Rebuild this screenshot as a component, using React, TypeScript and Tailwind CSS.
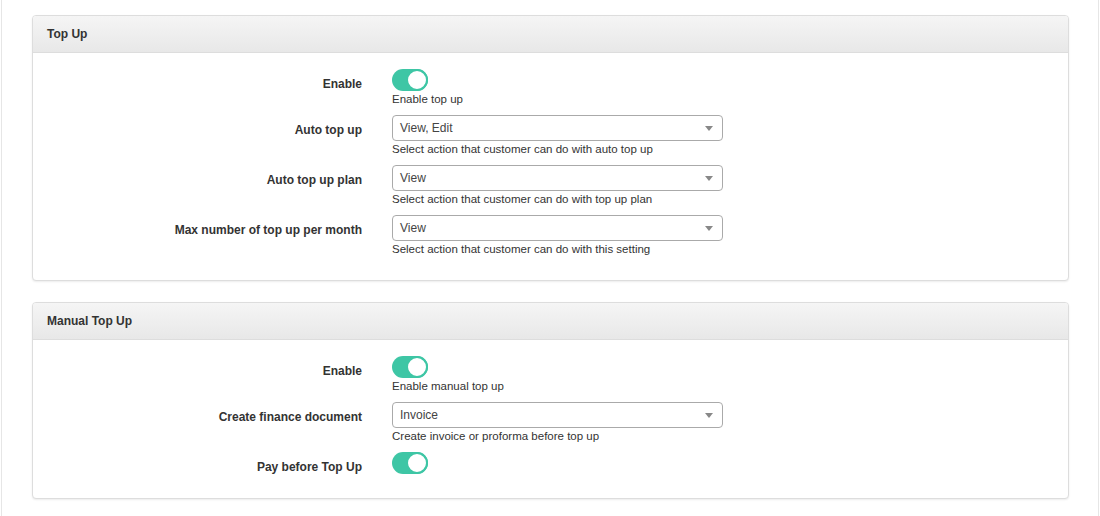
import React from 'react';

type Row =
  | { kind: 'toggle'; label: string; help?: string }
  | { kind: 'select'; label: string; value: string; help?: string };

const topUpRows: Row[] = [
  { kind: 'toggle', label: 'Enable', help: 'Enable top up' },
  { kind: 'select', label: 'Auto top up', value: 'View, Edit', help: 'Select action that customer can do with auto top up' },
  { kind: 'select', label: 'Auto top up plan', value: 'View', help: 'Select action that customer can do with top up plan' },
  { kind: 'select', label: 'Max number of top up per month', value: 'View', help: 'Select action that customer can do with this setting' },
];

const manualRows: Row[] = [
  { kind: 'toggle', label: 'Enable', help: 'Enable manual top up' },
  { kind: 'select', label: 'Create finance document', value: 'Invoice', help: 'Create invoice or proforma before top up' },
  { kind: 'toggle', label: 'Pay before Top Up' },
];

function Toggle() {
  return (
    <div className="w-[36px] h-[22px] rounded-full bg-[#3ec6a5] relative">
      <div className="absolute right-0 top-0 w-[22px] h-[22px] rounded-full bg-white border-2 border-[#3ec6a5]" />
    </div>
  );
}

function Select({ value }: { value: string }) {
  return (
    <div className="w-[331px] h-[26px] border border-[#aaaaaa] rounded-[4px] flex items-center justify-between pl-[7px] pr-[9px] text-[12px] text-[#444]">
      <span>{value}</span>
      <svg width="8" height="5" viewBox="0 0 8 5">
        <path d="M0 0h8L4 5z" fill="#888" />
      </svg>
    </div>
  );
}

function Panel({ title, rows }: { title: string; rows: Row[] }) {
  return (
    <div className="border border-[#dddddd] rounded-[4px] bg-white shadow-[0_1px_2px_rgba(0,0,0,0.08)] overflow-hidden">
      <div className="h-[37px] bg-gradient-to-b from-[#f5f5f5] to-[#e8e8e8] border-b border-[#dddddd] flex items-center pl-[14px] text-[12px] font-bold text-[#333]">
        {title}
      </div>
      <div className="pt-[16px] pb-[15px]">
        {rows.map((row, i) => (
          <div key={i} className="flex mb-[9px]">
            <div className="w-[329px] h-[22px] leading-[30px] text-right text-[12px] font-bold text-[#333] whitespace-nowrap">
              {row.label}
            </div>
            <div className="ml-[30px]">
              {row.kind === 'toggle' ? <Toggle /> : <Select value={row.value} />}
              {row.help && (
                <div className="mt-px text-[11.5px] leading-[14px] text-[#333]">{row.help}</div>
              )}
            </div>
          </div>
        ))}
      </div>
    </div>
  );
}

export default function App() {
  return (
    <div
      className="min-h-[516px] w-[1098px] ml-px border-x border-[#e6e6e6] bg-white pt-[15px] pl-[30px] pr-[29px]"
      style={{ fontFamily: '"Liberation Sans", Arial, sans-serif' }}
    >
      <Panel title="Top Up" rows={topUpRows} />
      <div className="h-[21px]" />
      <Panel title="Manual Top Up" rows={manualRows} />
    </div>
  );
}
